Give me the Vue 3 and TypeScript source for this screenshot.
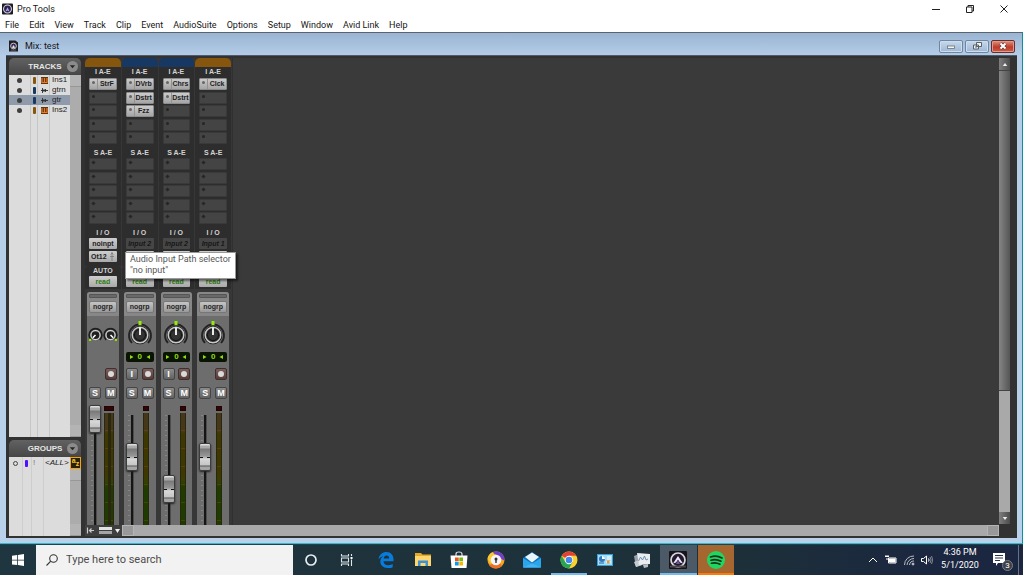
<script setup lang="ts">
interface Track { name: string; color: string; kind: 'inst' | 'audio'; selected?: boolean }
interface Channel {
  name: string
  color: string
  inserts: string[]
  input: string
  active: boolean
  stereo: boolean
  monitor: boolean
  level: number
}

const menus: string[] = ['File', 'Edit', 'View', 'Track', 'Clip', 'Event', 'AudioSuite', 'Options', 'Setup', 'Window', 'Avid Link', 'Help']

const brown = '#86560f'
const navy = '#173863'

const tracks: Track[] = [
  { name: 'Ins1', color: brown, kind: 'inst' },
  { name: 'gtrn', color: navy, kind: 'audio' },
  { name: 'gtr', color: navy, kind: 'audio', selected: true },
  { name: 'Ins2', color: brown, kind: 'inst' },
]

const channels: Channel[] = [
  { name: 'Ins1', color: brown, inserts: ['StrF', '', '', '', ''], input: 'noinpt', active: true, stereo: true, monitor: false, level: 100 },
  { name: 'gtrn', color: navy, inserts: ['DVrb', 'Dstrt', 'Fzz', '', ''], input: 'Input 2', active: false, stereo: false, monitor: true, level: 59 },
  { name: 'gtr', color: navy, inserts: ['Chrs', 'Dstrt', '', '', ''], input: 'Input 2', active: false, stereo: false, monitor: true, level: 24 },
  { name: 'Ins2', color: brown, inserts: ['Clck', '', '', '', ''], input: 'Input 1', active: false, stereo: false, monitor: false, level: 59 },
]
</script>

<template>
  <div class="screen">
    <header class="titlebar">
      <svg class="logo" viewBox="0 0 12 12" aria-hidden="true">
        <rect width="12" height="12" rx="1" fill="#1d1b22" />
        <circle cx="6" cy="6" r="4.300" fill="#2b2050" stroke="#d8d8de" stroke-width="1.200" />
        <path d="M3.500 9 6 4l2.500 5-2.500-1.500z" fill="#b9a5e6" />
      </svg>
      <h1>Pro Tools</h1>
      <div class="win-controls">
        <button type="button" aria-label="Minimize">
          <svg viewBox="0 0 10 10"><path d="M1 5.500h8" /></svg>
        </button>
        <button type="button" aria-label="Restore">
          <svg viewBox="0 0 10 10"><path d="M1.500 3h5.500v5.500H1.500zM3 3V1.500h5.500V7H7" /></svg>
        </button>
        <button type="button" aria-label="Close">
          <svg viewBox="0 0 10 10"><path d="M1.500 1.500l7 7M8.500 1.500l-7 7" /></svg>
        </button>
      </div>
    </header>

    <nav class="menubar">
      <button v-for="m in menus" :key="m" type="button">{{ m }}</button>
    </nav>

    <div class="mdi">
      <div class="mdi-title">
        <svg class="logo" viewBox="0 0 10 12" aria-hidden="true">
          <path d="M0 0h7l3 2v10H0z" fill="#1f1f22" />
          <circle cx="5" cy="6" r="3.200" fill="#33245c" stroke="#d5d5d5" />
          <path d="M3 8.500 5 5l2 3.500zM2 10.500h6" fill="#eee" stroke="#999" stroke-width=".6" />
        </svg>
        <h2>Mix: test</h2>
        <div class="mdi-controls">
          <button type="button" aria-label="Minimize mix window">
            <svg viewBox="0 0 20 10"><rect x="6.500" y="5" width="7" height="2.500" fill="#f4f4ec" stroke="#68727c" stroke-width=".8" /></svg>
          </button>
          <button type="button" aria-label="Restore mix window">
            <svg viewBox="0 0 20 10"><path d="M9.500 1.500h5v4h-5zM6.500 4h5v4h-5z" fill="#f4f4ec" stroke="#57616b" /><path d="M8 5.500h2v1H8z" fill="#57616b" /></svg>
          </button>
          <button type="button" class="close" aria-label="Close mix window">
            <svg viewBox="0 0 20 10"><path d="M7.500 2.500l5 5M12.500 2.500l-5 5" stroke="#5c3a3a" stroke-width="3.400" /><path d="M7.500 2.500l5 5M12.500 2.500l-5 5" stroke="#fff" stroke-width="2" /></svg>
          </button>
        </div>
      </div>

      <main class="frame">
        <aside class="side">
          <section class="panel grow">
            <div class="panel-head">
              <h3>TRACKS</h3>
              <button type="button" class="drop" aria-label="Tracks menu"><svg viewBox="0 0 10 10"><path d="M2 3.500h6L5 7z" fill="#272727" /></svg></button>
            </div>
            <div class="panel-body">
              <ul class="list tracks">
                <li v-for="t in tracks" :key="t.name" :class="{ selected: t.selected }">
                  <span class="dot"></span>
                  <span class="swatch" :style="{ background: t.color }"></span>
                  <svg v-if="t.kind === 'inst'" viewBox="0 0 7 7" aria-hidden="true"><rect width="7" height="7" fill="#5b3518" /><path d="M1 1v5M3.500 1v5M6 1v5M1 5.500h5" stroke="#f07c20" stroke-width="1.200" /></svg>
                  <svg v-else viewBox="0 0 7 7" aria-hidden="true"><path d="M0 3.500h7M1.500 1v5M3 2v3M4.500 2v3" stroke="#2d2d2d" stroke-width=".9" /></svg>
                  <span>{{ t.name }}</span>
                </li>
              </ul>
              <div class="side-scroll"><i></i><b></b><i></i></div>
            </div>
          </section>
          <section class="panel groups">
            <div class="panel-head">
              <h3>GROUPS</h3>
              <button type="button" class="drop" aria-label="Groups menu"><svg viewBox="0 0 10 10"><path d="M2 3.500h6L5 7z" fill="#272727" /></svg></button>
            </div>
            <div class="panel-body">
              <ul class="list group-list">
                <li>
                  <span class="ring"></span>
                  <span class="swatch violet"></span>
                  <span class="bang">!</span>
                  <em>&lt;ALL&gt;</em>
                </li>
              </ul>
              <div class="side-scroll">
                <button type="button" class="az" aria-label="Group list keyboard focus"><span>a</span><span>z</span></button>
                <i></i><b></b><i></i>
              </div>
            </div>
          </section>
        </aside>

        <div class="mix">
          <div class="stage">
            <div class="channels">
              <article v-for="c in channels" :key="c.name" class="channel" :aria-label="c.name">
                <div class="tab" :style="{ background: c.color }"></div>
                <section class="rack">
                  <h4>I A-E</h4>
                  <div class="slots">
                    <button v-for="(s, i) in c.inserts" :key="i" type="button" :class="['slot', { filled: s }]" :aria-label="s || 'Empty insert'"><i></i><span>{{ s }}</span></button>
                  </div>
                </section>
                <section class="rack">
                  <h4>S A-E</h4>
                  <div class="slots">
                    <button v-for="i in 5" :key="i" type="button" class="slot send" aria-label="Empty send"><i></i></button>
                  </div>
                </section>
                <section class="rack io">
                  <h4>I / O</h4>
                  <button type="button" :class="['chip', { off: !c.active }]">{{ c.input }}</button>
                  <button type="button" class="chip out"><span>Ot12</span>
                    <svg viewBox="0 0 6 9" aria-hidden="true"><path d="M3 0v9M1 4.500h4M1.500 2.500 3 1l1.500 1.500" fill="none" stroke="#777" stroke-width=".8" /></svg>
                  </button>
                </section>
                <section class="rack auto">
                  <h4>AUTO</h4>
                  <button type="button" class="chip read">read</button>
                </section>
                <section class="strip">
                  <div class="group">
                    <i></i>
                    <button type="button">nogrp</button>
                  </div>
                  <div v-if="c.stereo" class="pan pair">
                    <svg v-for="k in 2" :key="k" viewBox="0 0 14 14" role="img" aria-label="Pan">
                      <path d="M3 12A6 6 0 1 1 11 12" fill="none" stroke="#1d1d1d" stroke-width="1.500" />
                      <circle cx="7" cy="7.500" r="4.200" fill="#202020" stroke="#d6d6d6" stroke-width="1.100" />
                      <path :d="k === 1 ? 'M7 7.500 4.500 10' : 'M7 7.500 9.500 10'" stroke="#fff" stroke-width="1.500" />
                      <rect :x="k === 1 ? 1 : 11" y="11" width="2" height="2" fill="#91ef00" />
                    </svg>
                  </div>
                  <div v-else class="pan">
                    <svg viewBox="0 0 28 28" role="img" aria-label="Pan">
                      <path d="M6 23A11 11 0 1 1 22 23" fill="none" stroke="#222" stroke-width="1.800" />
                      <circle cx="14" cy="15" r="9.200" fill="#191919" />
                      <circle cx="14" cy="15" r="7.800" fill="#303030" stroke="#c9c9c9" stroke-width="1.500" />
                      <circle cx="14" cy="15" r="5.500" fill="#333" stroke="#111" />
                      <path d="M14 15V7.500" stroke="#fff" stroke-width="1.800" />
                      <rect x="12.500" y="1" width="3" height="4" fill="#91ef00" />
                    </svg>
                  </div>
                  <div :class="['readout', { blank: c.stereo }]">
                    <template v-if="!c.stereo"><svg viewBox="0 0 4 4"><path d="M0 0l3.500 2L0 4z" fill="#91dc10" /></svg><output>0</output><svg viewBox="0 0 4 4"><path d="M4 0L.5 2 4 4z" fill="#91dc10" /></svg></template>
                  </div>
                  <div class="keys">
                    <button v-if="c.monitor" type="button">I</button>
                    <span v-else></span>
                    <button type="button" class="rec" aria-label="Record enable"><i></i></button>
                  </div>
                  <div class="keys">
                    <button type="button">S</button>
                    <button type="button">M</button>
                  </div>
                  <div class="level">
                    <div class="lane">
                      <input type="range" min="0" max="100" :value="c.level" :aria-label="c.name + ' volume'" />
                    </div>
                    <div :class="['meter', { wide: c.stereo }]">
                      <i></i>
                      <div><b></b><b v-if="c.stereo"></b></div>
                    </div>
                  </div>
                </section>
              </article>
            </div>
            <div class="canvas"></div>
            <div class="vscroll">
              <button type="button" aria-label="Scroll up"><svg viewBox="0 0 8 6"><path d="M1 5l3-4 3 4z" fill="#eee" /></svg></button>
              <div class="thumb"></div>
              <div class="rest"></div>
              <button type="button" aria-label="Scroll down"><svg viewBox="0 0 8 6"><path d="M1 1l3 4 3-4z" fill="#eee" /></svg></button>
            </div>
          </div>
          <footer class="hbar">
            <div class="hbar-tools">
              <svg viewBox="0 0 36 11" aria-hidden="true">
                <path d="M2.500 2.500v6M4 5.500h5M6.500 3.500l-2 2 2 2" fill="none" stroke="#ccc" stroke-width="1.200" />
                <rect x="14" y="2" width="13" height="3" fill="#e2e2e2" /><rect x="14" y="6" width="13" height="3" fill="#a5a5a5" />
                <path d="M30 4h5l-2.500 4z" fill="#eee" />
              </svg>
            </div>
            <div class="htrack"><i></i><i></i></div>
          </footer>
          <div class="tooltip" role="tooltip">Audio Input Path selector<br />"no input"</div>
        </div>
      </main>
    </div>

    <footer class="taskbar">
      <button type="button" class="start" aria-label="Start">
        <svg viewBox="0 0 12 12"><path d="M0 1.700 5.200 1v4.700H0zM6 .9 12 0v5.700H6zM0 6.400h5.200v4.700L0 10.400zM6 6.400h6V12l-6-.9z" fill="#fff" /></svg>
      </button>
      <label class="search">
        <svg viewBox="0 0 12 12" aria-hidden="true"><circle cx="7.500" cy="4.500" r="3.800" /><path d="M4.800 7.200.5 11.500" /></svg>
        <input type="text" placeholder="Type here to search" aria-label="Search" />
      </label>
      <div class="sys">
        <button type="button" aria-label="Cortana"><svg viewBox="0 0 20 20"><circle cx="10" cy="10" r="5" fill="none" stroke="#e8eef2" stroke-width="1.700" /></svg></button>
        <button type="button" aria-label="Task view"><svg viewBox="0 0 20 20"><path d="M4.500 4v2h7V4M4.500 8h7v4h-7zM4.500 16v-2h7v2M14.500 4v2M14.500 9.500V16" fill="none" stroke="#dfe6ea" stroke-width="1.100" /><rect x="13.500" y="7" width="2" height="2" fill="#fff" /></svg></button>
      </div>
      <div class="apps">
        <button type="button" aria-label="Edge"><svg viewBox="0 0 20 20"><path d="M2.500 9.500C3 4.500 6.500 2 10.500 2c4.500 0 7 3.500 7 7v2.200H7.500c.2 3 2.600 4 4.800 4 1.800 0 3.200-.5 4.400-1.200v3.200C15.300 18 13.500 18.300 11.500 18 7 17.800 4.300 15 4.300 11.500c0-2.700 1.400-4.600 3.200-5.600C5.500 6.200 3.800 7.600 2.500 9.500zM7.700 8.500h5.500c0-2-1-3-2.600-3S8 6.600 7.700 8.500z" fill="#087bdb" fill-rule="evenodd" /></svg></button>
        <button type="button" aria-label="File Explorer"><svg viewBox="0 0 20 20"><path d="M2 3h6l1.500 1.500H18V16H2z" fill="#e5a928" /><path d="M2 6h16v10H2z" fill="#ffd66d" /><path d="M5 16v-5.500h10V16h-2.500v-3h-5v3z" fill="#3b91d8" /></svg></button>
        <button type="button" aria-label="Store"><svg viewBox="0 0 20 20"><path d="M7 6V4q0-2 3-2t3 2v2" fill="none" stroke="#d9dcde" stroke-width="1.200" /><path d="M1.500 5.500h17L17.500 18h-15z" fill="#fff" /><path d="M6 7.500h3.700v3.700H6z" fill="#f15022" /><path d="M10.300 7.500H14v3.700h-3.700z" fill="#77b900" /><path d="M6 11.800h3.700v3.700H6z" fill="#059fe9" /><path d="M10.300 11.800H14v3.700h-3.700z" fill="#fbb600" /></svg></button>
        <button type="button" aria-label="Secure browser"><svg viewBox="0 0 20 20"><circle cx="10" cy="10" r="8.500" fill="#f6a71c" /><path d="M5 3a8.500 8.500 0 0 1 13.500 7.500C15 10 13 4 5 3z" fill="#7040c8" /><path d="M1.500 9A8.500 8.500 0 0 1 7 2l2 4-4 8z" fill="#fbc92d" /><path d="M3 15a8.500 8.500 0 0 0 13 1l-3-4z" fill="#ee6f25" /><circle cx="10" cy="10" r="5.300" fill="#f5f4fa" /><circle cx="10" cy="9" r="1.500" fill="#333" /><path d="M9.300 9h1.400v4H9.300z" fill="#333" /></svg></button>
        <button type="button" aria-label="Mail"><svg viewBox="0 0 20 20"><path d="M1 8l9-6 9 6v9.500H1z" fill="#0f6fc0" /><path d="M3 7l7-4.500L17 7l-7 5.500z" fill="#eaf6ff" /><path d="M1 8l9 5.500L19 8v9.500H1z" fill="#2ba6ea" /><path d="M1 17.500 10 13.500l9 4z" fill="#45b4f2" /></svg></button>
        <button type="button" class="open" aria-label="Chrome"><svg viewBox="0 0 20 20"><circle cx="10" cy="10" r="8.500" fill="#fcd12f" /><path d="M10 10 2.640 5.750A8.500 8.500 0 0 1 17.360 5.750H10z" fill="#e24235" /><path d="M2.640 5.750A8.500 8.500 0 0 0 10 18.500L13.700 12.100 10 10 6.300 12.100z" fill="#26a556" /><circle cx="10" cy="10" r="4.200" fill="#fff" /><circle cx="10" cy="10" r="3.300" fill="#4287f0" /></svg></button>
        <button type="button" aria-label="Control Panel"><svg viewBox="0 0 20 20"><rect x="2" y="4" width="16" height="12" fill="#35a1dc" /><rect x="3" y="5" width="14" height="10" fill="#a5dcf7" /><circle cx="7" cy="9" r="3" fill="#3178bc" /><path d="M7 9V6a3 3 0 0 1 3 3z" fill="#fff" /><path d="M12 7h4M12 9h4M11 12h5" stroke="#fff" /><path d="M4 13h5" stroke="#22659c" /><path d="M12 10.500h2.500v3H12z" fill="#ef9b28" /></svg></button>
        <button type="button" aria-label="System monitor"><svg viewBox="0 0 20 20"><path d="M2 6l5-2 3 11-6 2z" fill="#9aa2a7" /><path d="M2 12l5-2 3 5-6 2z" fill="#c6cbce" /><path d="M5 3l13 1v10l-11 1z" fill="#e9edf0" /><path d="M6.500 11l2-4 2 3 2-4 1.500 4 2-1" fill="none" stroke="#6d94b6" /><path d="M11 15l5-1v3l-4 1z" fill="#b9bec2" /></svg></button>
        <button type="button" class="current" aria-label="Pro Tools"><svg viewBox="0 0 20 20"><rect x="1" y="1" width="18" height="18" rx="1" fill="#17151a" /><circle cx="10" cy="10" r="7" fill="#231a32" stroke="#d9d7dc" stroke-width="1.700" /><path d="M5 13.500 10 6l5 7.500-3-1-2-3-2 3z" fill="#eeeaf4" /><path d="M8 14l2-4 2 4z" fill="#70529f" /><path d="M2 16.500h16" stroke="#4b464b" stroke-width="2" /></svg></button>
        <button type="button" class="spotify" aria-label="Spotify"><svg viewBox="0 0 20 20"><circle cx="10" cy="10" r="9" fill="#1ed760" /><path d="M4.500 7q6-2 11.500 1M5 10.200q5-1.600 10 1M5.500 13.200q4.500-1.200 8.500 1" fill="none" stroke="#15301e" stroke-width="1.700" stroke-linecap="round" /></svg></button>
      </div>
      <div class="tray">
        <button type="button" aria-label="Hidden icons"><svg viewBox="0 0 12 12"><path d="M2 8l4-4 4 4" /></svg></button>
        <button type="button" aria-label="Battery"><svg viewBox="0 0 12 12"><path d="M3.500 4h7.500v5H3.500z" /><path d="M4.500 5h5.500v3H4.500z" fill="#fff" /><path d="M0 2.500h4M1 1v1.500M3 1v1.500M2 4v2" /></svg></button>
        <button type="button" class="dim" aria-label="Network"><svg viewBox="0 0 12 12"><path d="M1.500 11A9 9 0 0 1 11 2M4 11a7 7 0 0 1 7-6.500M6.500 11A4.500 4.500 0 0 1 11 7" /><circle cx="10" cy="10" r="1" fill="#fff" /></svg></button>
        <button type="button" aria-label="Volume"><svg viewBox="0 0 12 12"><path d="M.5 4.500h2l3-2.500v8l-3-2.500h-2zM7.500 4.500q1.200 1.500 0 3" /><path d="M9 3q2.200 3 0 6M10.500 2q2.500 4 0 8" opacity=".45" /></svg></button>
        <button type="button" class="clock"><span>4:36 PM</span><span>5/1/2020</span></button>
        <button type="button" class="notes" aria-label="3 notifications">
          <svg viewBox="0 0 20 20"><path d="M2 3h12v10H7l-2 3v-3H2z" fill="#fff" stroke="none" /><path d="M4 5.500h8M4 8h8M4 10.500h5" stroke="#26374a" /></svg>
          <span>3</span>
        </button>
        <i class="peek"></i>
      </div>
    </footer>
  </div>
</template>

<style>
html, body { margin: 0; background: #fff; overflow: hidden; }
</style>

<style scoped>
* { box-sizing: border-box; }
button, input { font: inherit; color: inherit; border: 0; padding: 0; margin: 0; background: none; }
button { display: flex; align-items: center; justify-content: center; }
h1, h2, h3, h4, ul { margin: 0; padding: 0; font-weight: 400; list-style: none; }
svg { display: block; flex: none; }

.screen { height: 100vh; display: flex; flex-direction: column; font: 9px/12px Roboto, "Open Sans", sans-serif; color: #161616; background: #fff; }

.titlebar { height: 17px; flex: none; display: flex; align-items: center; padding: 0 2px; }
.logo { width: 11px; height: 12px; }
.titlebar h1 { margin-left: 4px; font-size: 9px; flex: 1; }
.win-controls { display: flex; }
.win-controls button { width: 34px; height: 16px; }
.win-controls svg { width: 10px; height: 10px; fill: none; stroke: #222; }

.menubar { height: 15px; flex: none; display: flex; gap: 10px; padding-left: 5px; }

.mdi { flex: 1; min-height: 0; display: flex; flex-direction: column; border-top: 1px solid #5b646d; padding: 0 5px 5px 6px; background: linear-gradient(#9ab5d3, #b5cde7 23px, #b9d1ea); border-right: 1px solid #0c8fa3; border-bottom: 1px solid #43b4c4; }
.mdi-title { height: 22px; flex: none; display: flex; align-items: center; padding: 4px 2px 0 3px; }
.mdi-title .logo { width: 9px; }
.mdi-title h2 { margin-left: 7px; flex: 1; font-size: 9px; }
.mdi-controls { display: flex; gap: 2px; }
.mdi-controls button { width: 24px; height: 13px; border: 1px solid #6f86a0; border-radius: 2px; background: linear-gradient(#c6d9ed, #9db7d3); box-shadow: inset 0 0 0 1px #cfdeee; }
.mdi-controls svg { width: 20px; height: 10px; }
.mdi-controls .close { border-color: #6d2b26; background: linear-gradient(#dd9182, #bf3b27 55%, #cb5e49); box-shadow: inset 0 0 0 1px #df9c8e; }

.frame { flex: 1; min-height: 0; display: flex; gap: 4px; padding: 2px 7px 2px 3px; background: #323232; border-top: 1px solid #4d5d6c; font-family: "Liberation Sans", Arial, sans-serif; }

.side { width: 72px; flex: none; display: flex; flex-direction: column; gap: 3px; }
.panel { display: flex; flex-direction: column; min-height: 0; }
.panel.grow { flex: 1; }
.groups { height: 96px; }
.panel-head { height: 17px; flex: none; display: flex; align-items: center; padding: 0 3px; border-radius: 5px 5px 0 0; background: linear-gradient(#626262, #464646); }
.panel-head h3 { flex: 1; text-align: center; padding-left: 11px; font-size: 8px; font-weight: 700; color: #e6e6e6; }
.drop { width: 11px; height: 11px; border-radius: 50%; background: #8b8b8b; }
.drop svg { width: 9px; height: 9px; }
.panel-body { flex: 1; min-height: 0; display: flex; }
.list { flex: 1; font-size: 8px; line-height: 10px; color: #222; }
.tracks { background: linear-gradient(90deg, #dcdcdc 21px, #c6c6c6 21px 22px, #dcdcdc 22px 28px, #c6c6c6 28px 29px, #dcdcdc 29px 40px, #c6c6c6 40px 41px, #dcdcdc 41px); }
.group-list { background: linear-gradient(90deg, #dcdcdc 13px, #cdcdcd 13px 14px, #dcdcdc 14px 22px, #cdcdcd 22px 23px, #dcdcdc 23px 34px, #cdcdcd 34px 35px, #dcdcdc 35px); }
.tracks li { height: 10px; display: grid; grid-template-columns: 24px 8px 11px 1fr; align-items: center; }
.tracks li.selected { background: #8f9bab; }
.dot { width: 5px; height: 5px; border-radius: 50%; background: #3f3f3f; margin-left: 8px; }
.swatch { width: 3px; height: 7px; border-radius: 1px; }
.violet { background: #5010ff; }
.tracks svg { width: 7px; height: 7px; }
.group-list li { height: 12px; display: grid; grid-template-columns: 16px 8px 12px 1fr; align-items: center; }
.ring { width: 5px; height: 5px; border: 1px solid #444; border-radius: 50%; margin-left: 4px; }
.bang { color: #777; }
.side-scroll { width: 11px; flex: none; display: flex; flex-direction: column; background: #acacac; }
.side-scroll i { height: 12px; background: #b4b4b4; border-bottom: 1px solid #989898; }
.side-scroll b { flex: 1; }
.az { height: 12px; flex: none; background: #2a2209; border: 1px solid #f0a512; color: #ffc62c; font-size: 7px; line-height: 6px; font-weight: 700; align-items: flex-start; }
.az span:last-child { padding-top: 3px; }

.mix { position: relative; flex: 1; min-width: 0; display: flex; flex-direction: column; }
.stage { flex: 1; min-height: 0; display: flex; }
.channels { width: 147px; flex: none; display: flex; gap: 1px; padding-right: 1px; background: #373737; }
.channel { flex: 1; min-width: 0; display: flex; flex-direction: column; min-height: 0; }
.tab { height: 9px; flex: none; border-radius: 5px 5px 0 0; }
.rack { flex: none; padding: 0 4px 4px; background: #2d2d2d; }
.rack h4 { height: 10px; text-align: center; font-size: 7px; line-height: 10px; font-weight: 700; color: #d2d2d2; white-space: nowrap; }
.tab + .rack h4 { height: 11px; }
.slots { height: 66px; display: flex; flex-direction: column; justify-content: space-between; }
.slot { height: 12px; width: 100%; background: #444; border: 1px solid #393939; border-radius: 1px; font-size: 7px; line-height: 10px; font-weight: 700; color: #1e1e1e; justify-content: flex-start; overflow: hidden; }
.slot i { width: 3px; height: 3px; flex: none; margin: 0 2px 3px; border-radius: 50%; background: #262626; }
.slot.send i { border-radius: 0; transform: rotate(45deg); }
.slot.filled { background: linear-gradient(#cbcbcb, #a5a5a5); border-color: #8c8c8c; }
.slot.filled i { background: #666; }
.slot span { flex: 1; height: 10px; text-align: center; }
.slot.filled span { border-left: 1px solid #929292; }
.chip { width: 100%; height: 11px; background: linear-gradient(#cecece, #a9a9a9); border-radius: 1px; font-size: 7px; line-height: 11px; font-weight: 700; color: #222; white-space: nowrap; }
.chip.off { background: #464646; color: #171717; font-style: italic; }
.io .chip { margin-bottom: 2px; }
.io { padding-bottom: 2px; }
.auto { padding-bottom: 2px; border-radius: 4px 4px 0 0; }
.chip.out svg { width: 6px; height: 9px; margin-left: 2px; }
.chip.read { color: #2d7a10; }

.strip { flex: 1; min-height: 0; margin: 3px 2px 0; padding: 0 2px; display: flex; flex-direction: column; background: #6d6d6d; border-radius: 3px 3px 0 0; overflow: hidden; }
.group { height: 24px; flex: none; margin: 0 -2px; padding: 2px 2px 3px; background: #878787; }
.group i { display: block; height: 4px; margin-bottom: 3px; background: #696969; border: 1px solid #555; border-radius: 1px; }
.group button { width: 100%; height: 12px; border: 1px solid #777; border-radius: 2px; background: linear-gradient(#c5c5c5, #999); font-size: 7px; line-height: 10px; font-weight: 700; color: #252525; }
.pan { height: 36px; flex: none; display: flex; align-items: center; justify-content: center; }
.pan svg { width: 28px; height: 28px; }
.pair { margin: 0 -1px; justify-content: space-between; }
.pair svg { width: 15px; height: 15px; }
.readout { height: 10px; flex: none; display: flex; align-items: center; justify-content: space-around; padding: 0 2px; border-radius: 2px; background: #0a1402; color: #91dc10; font-size: 8px; line-height: 10px; font-weight: 700; }
.readout svg { width: 4px; height: 4px; }
.readout.blank { background: none; }
.keys { flex: none; display: flex; justify-content: space-between; margin-top: 6px; }
.keys + .keys { margin-top: 7px; }
.keys button { width: 12px; height: 12px; border: 1px solid #454545; border-radius: 2px; background: linear-gradient(#8c8c8c, #626262); color: #fff; font-size: 9px; line-height: 10px; font-weight: 700; }
.keys .rec { background: linear-gradient(#785f5b, #563d39); border-color: #3f302e; }
.rec i { width: 6px; height: 6px; border-radius: 50%; background: #dadada; }
.level { flex: 1; min-height: 0; margin-top: 6px; display: flex; }
.lane { width: 12px; height: 100%; background: repeating-linear-gradient(#858585 0 1px, transparent 1px 5px) 2px 10px / 2px 100% no-repeat; }
.lane input { appearance: none; display: block; writing-mode: vertical-lr; direction: rtl; width: 12px; height: 100%; background: linear-gradient(90deg, transparent 5px, #151515 5px 7px, #4d4d4d 7px 8px, transparent 8px) 0 10px no-repeat; }
.lane input::-webkit-slider-thumb { appearance: none; width: 12px; height: 28px; border: 1px solid #3c3c3c; border-radius: 2px; background: linear-gradient(90deg, #111 3px, transparent 3px 7px, #111 7px) 0 13px / 100% 1px no-repeat, linear-gradient(#dedede 1px, #a9a9a9 2px 4px, #787878 5px, #969696 12px, #d8d8d8 15px, #c5c5c5 21px, #555 22px, #a5a5a5 23px); box-shadow: 0 1px 2px #222; }
.meter { width: 6px; margin-left: 5px; display: flex; flex-direction: column; }
.meter.wide { width: 10px; margin-left: 3px; }
.meter i { height: 5px; margin: 1px 0 2px; background: #330305; border: 1px solid #1d0505; flex: none; }
.meter div { flex: 1; display: flex; gap: 1px; background: #292515; }
.meter b { flex: 1; border: 1px solid #29270f; border-width: 0 1px; background: repeating-linear-gradient(transparent 0 17px, #8a520060 17px 18px), linear-gradient(#463719 19px, #3e3800 20px 62px, #334000 68px, #1e3c00 75px); }

.canvas { flex: 1; background: #3a3a3a; border-left: 1px solid #303030; }
.vscroll { width: 11px; flex: none; display: flex; flex-direction: column; margin-bottom: 1px; background: #a9a9a9; }
.vscroll button { width: 11px; height: 12px; flex: none; background: linear-gradient(90deg, #7e7e7e, #4c4c4c); }
.vscroll svg { width: 6px; height: 5px; }
.thumb { flex: 320; background: linear-gradient(90deg, #858585, #555); border: 1px solid #444; border-width: 1px 0; }
.rest { flex: 122; }
.hbar { height: 11px; flex: none; display: flex; padding-right: 11px; background: #323232; }
.hbar-tools { width: 37px; flex: none; background: #3f3f3f; }
.hbar-tools svg { width: 36px; height: 11px; }
.htrack { flex: 1; display: flex; justify-content: space-between; background: #a9a9a9; }
.htrack i { width: 12px; background: #989898; border: 1px solid #b4b4b4; }

.tooltip { position: absolute; left: 40px; top: 194px; padding: 1px 4px 2px; border: 1px solid #999; background: #fff; box-shadow: 2px 2px 2px #0008; font: 9px/11px Roboto, "Open Sans", sans-serif; color: #575757; white-space: nowrap; }

.taskbar { height: 31px; flex: none; display: flex; border-top: 1px solid #0c4a55; background: linear-gradient(90deg, #1f353f, #1d3039 72%, #1b2640 92%); color: #fff; }
.start { width: 36px; }
.start svg { width: 12px; height: 12px; }
.search { width: 257px; display: flex; align-items: center; gap: 8px; padding-left: 10px; background: #f2f2f2; }
.search svg { width: 12px; height: 12px; fill: none; stroke: #333; stroke-width: 1.100; }
.search input { flex: 1; min-width: 0; font-size: 11px; line-height: 16px; outline: 0; }
.search input::placeholder { color: #4c4c4c; opacity: 1; }
.sys { display: flex; width: 75px; }
.sys button { width: 36px; }
.sys svg, .apps svg { width: 20px; height: 20px; }
.apps { display: flex; width: 366px; }
.apps button { flex: 1; border-bottom: 2px solid transparent; border-top: 2px solid transparent; }
.apps .open { border-bottom-color: #76b9ed; }
.apps .current { background: #4b5a66; border-color: #4b5a66; border-bottom-color: #76b9ed; }
.apps .spotify { background: #a5662f; border-color: #a5662f; border-bottom-color: #ff7a0a; margin-left: 1px; }
.tray { margin-left: auto; display: flex; }
.tray button { width: 18px; }
.tray svg { width: 12px; height: 12px; fill: none; stroke: #fff; }
.tray .dim { opacity: .7; }
.tray .clock { width: 48px; flex-direction: column; padding-bottom: 2px; font-size: 9px; line-height: 13px; }
.tray .notes { width: 34px; position: relative; }
.tray .notes svg { width: 20px; height: 20px; }
.notes span { position: absolute; right: 5px; bottom: 4px; width: 11px; height: 11px; border-radius: 50%; background: #3e4147; border: 1px solid #7b8188; font-size: 8px; line-height: 9px; text-align: center; }
.peek { width: 5px; border-left: 1px solid #6a7385; }
</style>
